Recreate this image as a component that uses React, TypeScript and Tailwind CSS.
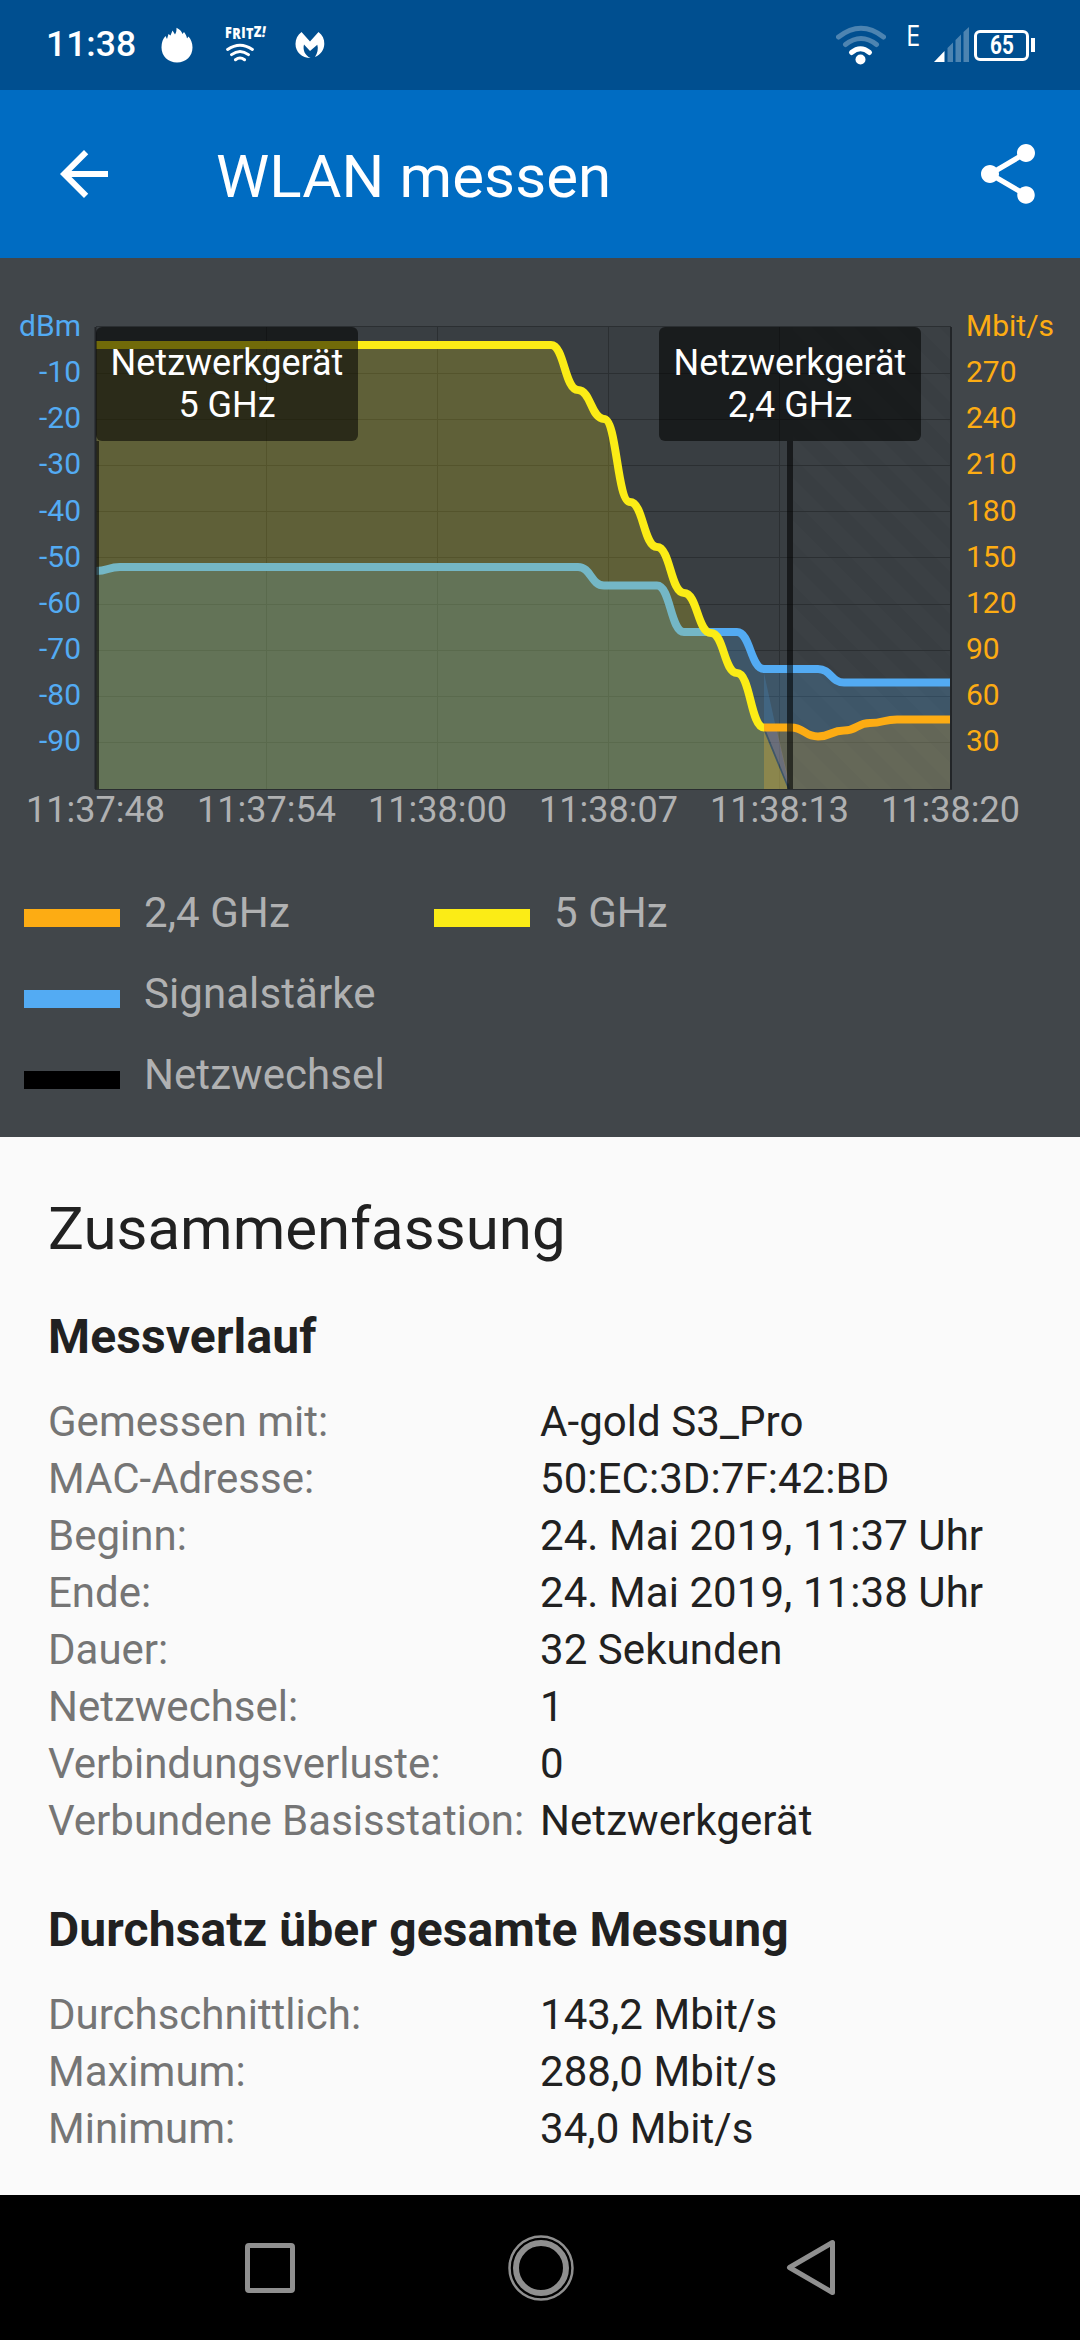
import type { ReactNode } from "react";

const PLOT_LEFT = 96;
const PLOT_RIGHT = 951;
const PLOT_TOP = 69;
const PLOT_BOTTOM = 531;

const dbm = ["dBm", "-10", "-20", "-30", "-40", "-50", "-60", "-70", "-80", "-90"];
const mbit = ["Mbit/s", "270", "240", "210", "180", "150", "120", "90", "60", "30"];
const times = ["11:37:48", "11:37:54", "11:38:00", "11:38:07", "11:38:13", "11:38:20"];
const gridX = [266.5, 437.5, 608.5, 779.5];
const gridY = [115.5, 161.5, 207.5, 253.5, 299.5, 346.5, 392.5, 438.5, 484.5];

type Point = [number, number];

const fast: Point[] = [
  [96, 87], [551, 87], [578, 132], [604, 161], [630, 244], [657, 289],
  [684, 335], [711, 375], [737, 415], [764, 469.5],
];
const signal: Point[] = [
  [96, 313], [120, 309], [578, 309], [604, 327.5], [657, 327.5], [684, 374],
  [737, 374], [764, 411], [818, 411], [844, 424.5], [951, 424.5],
];
const slow: Point[] = [
  [764, 469.5], [791, 469.5], [818, 478.5], [844, 472.5], [870, 465], [897, 461.5], [951, 461.5],
];

function curve(points: Point[]) {
  return points
    .map(([x, y], i) => {
      if (i === 0) return `M${x} ${y}`;
      const [px, py] = points[i - 1];
      const mid = (px + x) / 2;
      return `C${mid} ${py} ${mid} ${y} ${x} ${y}`;
    })
    .join(" ");
}

function area(points: Point[]) {
  const first = points[0][0];
  const last = points[points.length - 1][0];
  return `${curve(points)} L${last} ${PLOT_BOTTOM} L${first} ${PLOT_BOTTOM} Z`;
}

function StatusBar() {
  return (
    <div className="flex h-[90px] items-center bg-[#004f90] pr-[45px] pl-[46px] text-white">
      <span className="w-[89px] text-[35.5px] leading-none font-medium whitespace-nowrap">11:38</span>
      <svg className="ml-[25px] h-[36px] w-[34px]" viewBox="0 0 34 36" fill="currentColor">
        <path d="M17 35.500C8 35.500 1.500 29 1.500 20.500C1.500 15.500 3 11.500 5.500 9L7 12L8.500 7L10.500 8.500L12.500 3.500L15 7.500C16.500 5.500 16.500 3 16.500 .8C19.500 2.500 21.500 4 22.500 7L24 5C25.500 7 26.500 8.500 27 11.500L28.500 9.500C31 12.500 32.500 16 32.500 20.500C32.500 29 26 35.500 17 35.500Z" />
      </svg>
      <div className="ml-[31px] flex w-[36px] flex-col items-start">
        <span className="flex h-[14px] origin-left scale-x-[0.84] gap-[0.5px] font-['Open_Sans'] text-[15px] leading-[11px] font-extrabold">
          <span>F</span>
          <span className="translate-y-[1px]">R</span>
          <span>I</span>
          <span className="translate-y-[1px]">T</span>
          <span className="-translate-y-[1px]">Z</span>
          <span className="-translate-y-[1px] skew-x-[-10deg]">!</span>
        </span>
        <svg className="mt-px h-[21px] w-[30px]" viewBox="0 0 32 21" fill="none" stroke="currentColor" strokeWidth="3.200" strokeLinecap="round">
          <path d="M2.800 7.200Q16 -1.800 29.200 7.200M7 12.800Q16 6 25 12.800M11.200 18.200Q16 14.500 20.800 18.200" />
        </svg>
      </div>
      <svg className="ml-[34px] h-[26px] w-[30px]" viewBox="0 0 30 26" fill="currentColor">
        <path d="M6.500 0L15 9.500L23.500 0C27.500 3 29.500 7 29.300 12C29 18 26 22.500 20 25C22.500 21 23.500 17 22.300 12.800L15 19L9 12.500C7.500 18 10 23.500 15.500 26C7 26 .5 20 .5 12C.5 7 2.500 3 6.500 0Z" />
      </svg>
      <div className="grow" />
      <svg className="h-[40px] w-[50px]" viewBox="0 0 50 40" fill="none" strokeLinecap="round">
        <path d="M2.500 12Q25 -5.500 47.500 12M9.500 19.500Q25 7.500 40.500 19.500" stroke="#4d84b1" strokeWidth="5" />
        <path d="M15.500 27.500Q24.500 20 33.500 27.500" stroke="white" strokeWidth="5" />
        <circle cx="24.500" cy="34.500" r="5" fill="white" />
      </svg>
      <span className="mb-[22px] ml-[20px] w-[15px] origin-left scale-x-[0.88] font-['Open_Sans'] text-[29px] leading-none font-medium">E</span>
      <svg className="ml-[13px] h-[36px] w-[36px]" viewBox="0 0 36 36">
        <path d="M0 35H10.500V24Z" fill="white" />
        <path d="M13.500 35V21L19 15.500V35ZM21.500 35V13L27 7.500V35ZM29.500 35V5L35 0V35Z" fill="#4d84b1" />
      </svg>
      <div className="ml-[4px] flex h-[31px] w-[55px] items-center justify-center rounded-[6px] border-[3px] border-white">
        <span className="w-[23px] origin-left scale-x-[0.83] text-[25px] leading-none font-bold">65</span>
      </div>
      <div className="ml-[2px] h-[14px] w-[4px] bg-white" />
    </div>
  );
}

function AppBar() {
  return (
    <div className="flex h-[168px] items-center bg-[#006cc2] pr-[45px] pl-[60px] text-white">
      <svg className="h-[48px] w-[48px]" viewBox="4 4 16 16" fill="currentColor">
        <path d="M20 11H7.830l5.590-5.590L12 4l-8 8 8 8 1.410-1.410L7.830 13H20v-2z" />
      </svg>
      <h1 className="mt-[5px] ml-[108px] grow text-[60px] leading-none tracking-[0.1px]">WLAN messen</h1>
      <svg className="h-[60px] w-[54px]" viewBox="3 2 18 20" fill="currentColor">
        <path d="M18 16.080c-.76 0-1.440.3-1.960.77L8.910 12.700c.05-.23.09-.46.09-.7s-.04-.47-.09-.7l7.050-4.110c.54.5 1.250.81 2.040.81 1.660 0 3-1.340 3-3s-1.340-3-3-3-3 1.340-3 3c0 .24.040.47.090.7L8.040 9.810C7.500 9.310 6.790 9 6 9c-1.660 0-3 1.340-3 3s1.340 3 3 3c.79 0 1.500-.31 2.040-.81l7.120 4.160c-.05.21-.08.430-.08.650 0 1.610 1.310 2.920 2.920 2.920s2.920-1.310 2.920-2.920-1.310-2.920-2.920-2.920z" />
      </svg>
    </div>
  );
}

function AxisLabels({ labels, className }: { labels: string[]; className: string }) {
  return (
    <div className={`flex flex-col pt-[45px] text-[30px] ${className}`}>
      {labels.map((label) => (
        <span key={label} className="h-[46.150px] leading-[46.150px]">
          {label}
        </span>
      ))}
    </div>
  );
}

function Plot() {
  return (
    <svg className="block h-[533px] w-[862px]" viewBox="93 0 862 533" fill="none">
      <defs>
        <pattern id="stripes" width="30" height="30" patternUnits="userSpaceOnUse" patternTransform="rotate(-45)">
          <rect width="15" height="30" fill="#ffffff" fillOpacity="0.010" />
        </pattern>
      </defs>
      <rect x={PLOT_LEFT} y={PLOT_TOP} width={PLOT_RIGHT - PLOT_LEFT} height={462} fill="#393e42" />
      <rect x="793" y={PLOT_TOP} width="158" height="462" fill="url(#stripes)" />
      <g stroke="#2b2f32" strokeWidth="1">
        {gridX.map((x) => <path key={x} d={`M${x} ${PLOT_TOP}V${PLOT_BOTTOM}`} />)}
        {gridY.map((y) => <path key={y} d={`M${PLOT_LEFT} ${y}H${PLOT_RIGHT}`} />)}
        <path d={`M${PLOT_LEFT} 68.500H${PLOT_RIGHT}`} />
      </g>
      <path d={area(signal)} fill="#53abf3" fillOpacity="0.22" />
      <path d={curve(signal)} stroke="#53abf3" strokeWidth="8" />
      <path d="M764 415L776 470H764Z" fill="#53abf3" fillOpacity="0.18" />
      <path d={area(fast)} fill="#fbec16" fillOpacity="0.2" />
      <path d="M764 473L788 531H764Z" fill="#e0bb30" fillOpacity="0.48" />
      <path d="M766 473H777L789 524L788 527Z" fill="#a08c91" fillOpacity="0.45" />
      <path d="M776 469.500H791C804 469.500 804 478.500 818 478.500C832 478.500 830 472.500 844 472.500C858 472.500 856 465 870 465C884 465 883 461.500 897 461.500H951V531H790Z" fill="#fbac14" fillOpacity="0.2" />
      <path d={curve(fast)} stroke="#fbec16" strokeWidth="8" />
      <path d={curve(slow)} stroke="#fdac13" strokeWidth="8" />
      <path d="M790 183V531" stroke="black" strokeOpacity="0.57" strokeWidth="6" />
      <path d="M97.500 183V531" stroke="black" strokeOpacity="0.57" strokeWidth="3" />
      <path d="M95.500 69V531M951 69V531" stroke="#222528" strokeWidth="2" />
      <path d="M95 531.500H952" stroke="#2a2d30" strokeWidth="1" />
    </svg>
  );
}

function NetworkTag({ band, className }: { band: string; className: string }) {
  return (
    <div className={`absolute top-[69px] h-[114px] w-[262px] rounded-[6px] bg-black/55 pt-[15px] text-center text-[36px] leading-[42px] text-white ${className}`}>
      <div>Netzwerkgerät</div>
      <div>{band}</div>
    </div>
  );
}

function LegendItem({ color, children }: { color: string; children: ReactNode }) {
  return (
    <div className="flex h-[81px] items-center gap-6">
      <span className={`mt-[11px] h-[18px] w-[96px] ${color}`} />
      <span className="text-[42px] leading-none tracking-[0.070px]">{children}</span>
    </div>
  );
}

function ChartPanel() {
  return (
    <section className="h-[879px] bg-[#41464a]">
      <div className="relative flex h-[530px]">
        <AxisLabels labels={dbm} className="w-[93px] pr-[12px] text-right text-[#53abf3]" />
        <Plot />
        <AxisLabels labels={mbit} className="w-[125px] pl-[11px] text-[#fdac13]" />
        <NetworkTag band="5 GHz" className="left-[96px]" />
        <NetworkTag band="2,4 GHz" className="left-[659px]" />
      </div>
      <div className="flex justify-between pr-[44px] pl-[10px] text-[36px] leading-[44px] text-[#b0b1b2]">
        {times.map((time) => (
          <span key={time} className="flex w-[171px] justify-center">{time}</span>
        ))}
      </div>
      <div className="mt-[40px] grid grid-cols-[410px_1fr] px-6 text-[#b0b1b2]">
        <LegendItem color="bg-[#fdac13]">2,4 GHz</LegendItem>
        <LegendItem color="bg-[#fbec16]">5 GHz</LegendItem>
        <div className="col-span-2">
          <LegendItem color="bg-[#53abf3]">Signalstärke</LegendItem>
        </div>
        <div className="col-span-2">
          <LegendItem color="bg-black">Netzwechsel</LegendItem>
        </div>
      </div>
    </section>
  );
}

const history = [
  ["Gemessen mit:", "A-gold S3_Pro"],
  ["MAC-Adresse:", "50:EC:3D:7F:42:BD"],
  ["Beginn:", "24. Mai 2019, 11:37 Uhr"],
  ["Ende:", "24. Mai 2019, 11:38 Uhr"],
  ["Dauer:", "32 Sekunden"],
  ["Netzwechsel:", "1"],
  ["Verbindungsverluste:", "0"],
  ["Verbundene Basisstation:", "Netzwerkgerät"],
];

const throughput = [
  ["Durchschnittlich:", "143,2 Mbit/s"],
  ["Maximum:", "288,0 Mbit/s"],
  ["Minimum:", "34,0 Mbit/s"],
];

function Details({ rows }: { rows: string[][] }) {
  return (
    <dl className="grid grid-cols-[492px_1fr] text-[42px] leading-[57px] whitespace-nowrap">
      {rows.map(([term, value]) => (
        <div key={term} className="contents">
          <dt className="text-[#757575]">{term}</dt>
          <dd className="tracking-[0.070px] text-[#212121]">{value}</dd>
        </div>
      ))}
    </dl>
  );
}

function Summary() {
  return (
    <section className="h-[1058px] overflow-hidden bg-[#fafafa] px-12 pt-[56px] text-[#212121]">
      <h2 className="text-[60px] leading-[72px]">Zusammenfassung</h2>
      <h3 className="mt-[43px] mb-[28px] text-[48px] leading-[57px] font-bold tracking-[0.120px]">Messverlauf</h3>
      <Details rows={history} />
      <h3 className="mt-[52px] mb-[28px] text-[48px] leading-[57px] font-bold tracking-[0.120px]">Durchsatz über gesamte Messung</h3>
      <Details rows={throughput} />
    </section>
  );
}

function NavBar() {
  return (
    <div className="flex h-[145px] items-center justify-between bg-black pr-[244px] pl-[245px] text-[#8f8f8f]">
      <div className="h-[50px] w-[50px] rounded-[4px] border-[5px] border-current" />
      <svg className="h-[66px] w-[66px]" viewBox="0 0 66 66" fill="none" stroke="currentColor">
        <circle cx="33" cy="33" r="31.500" strokeWidth="2.500" />
        <circle cx="33" cy="33" r="25" strokeWidth="6" />
      </svg>
      <svg className="h-[58px] w-[50px]" viewBox="0 0 50 58" fill="none" stroke="currentColor" strokeWidth="5" strokeLinejoin="round">
        <path d="M46.500 3.500V53.500L3.500 28.500Z" />
      </svg>
    </div>
  );
}

export default function App() {
  return (
    <main className="flex h-[2340px] w-[1080px] flex-col overflow-hidden font-[Roboto,sans-serif]">
      <StatusBar />
      <AppBar />
      <ChartPanel />
      <Summary />
      <NavBar />
    </main>
  );
}
